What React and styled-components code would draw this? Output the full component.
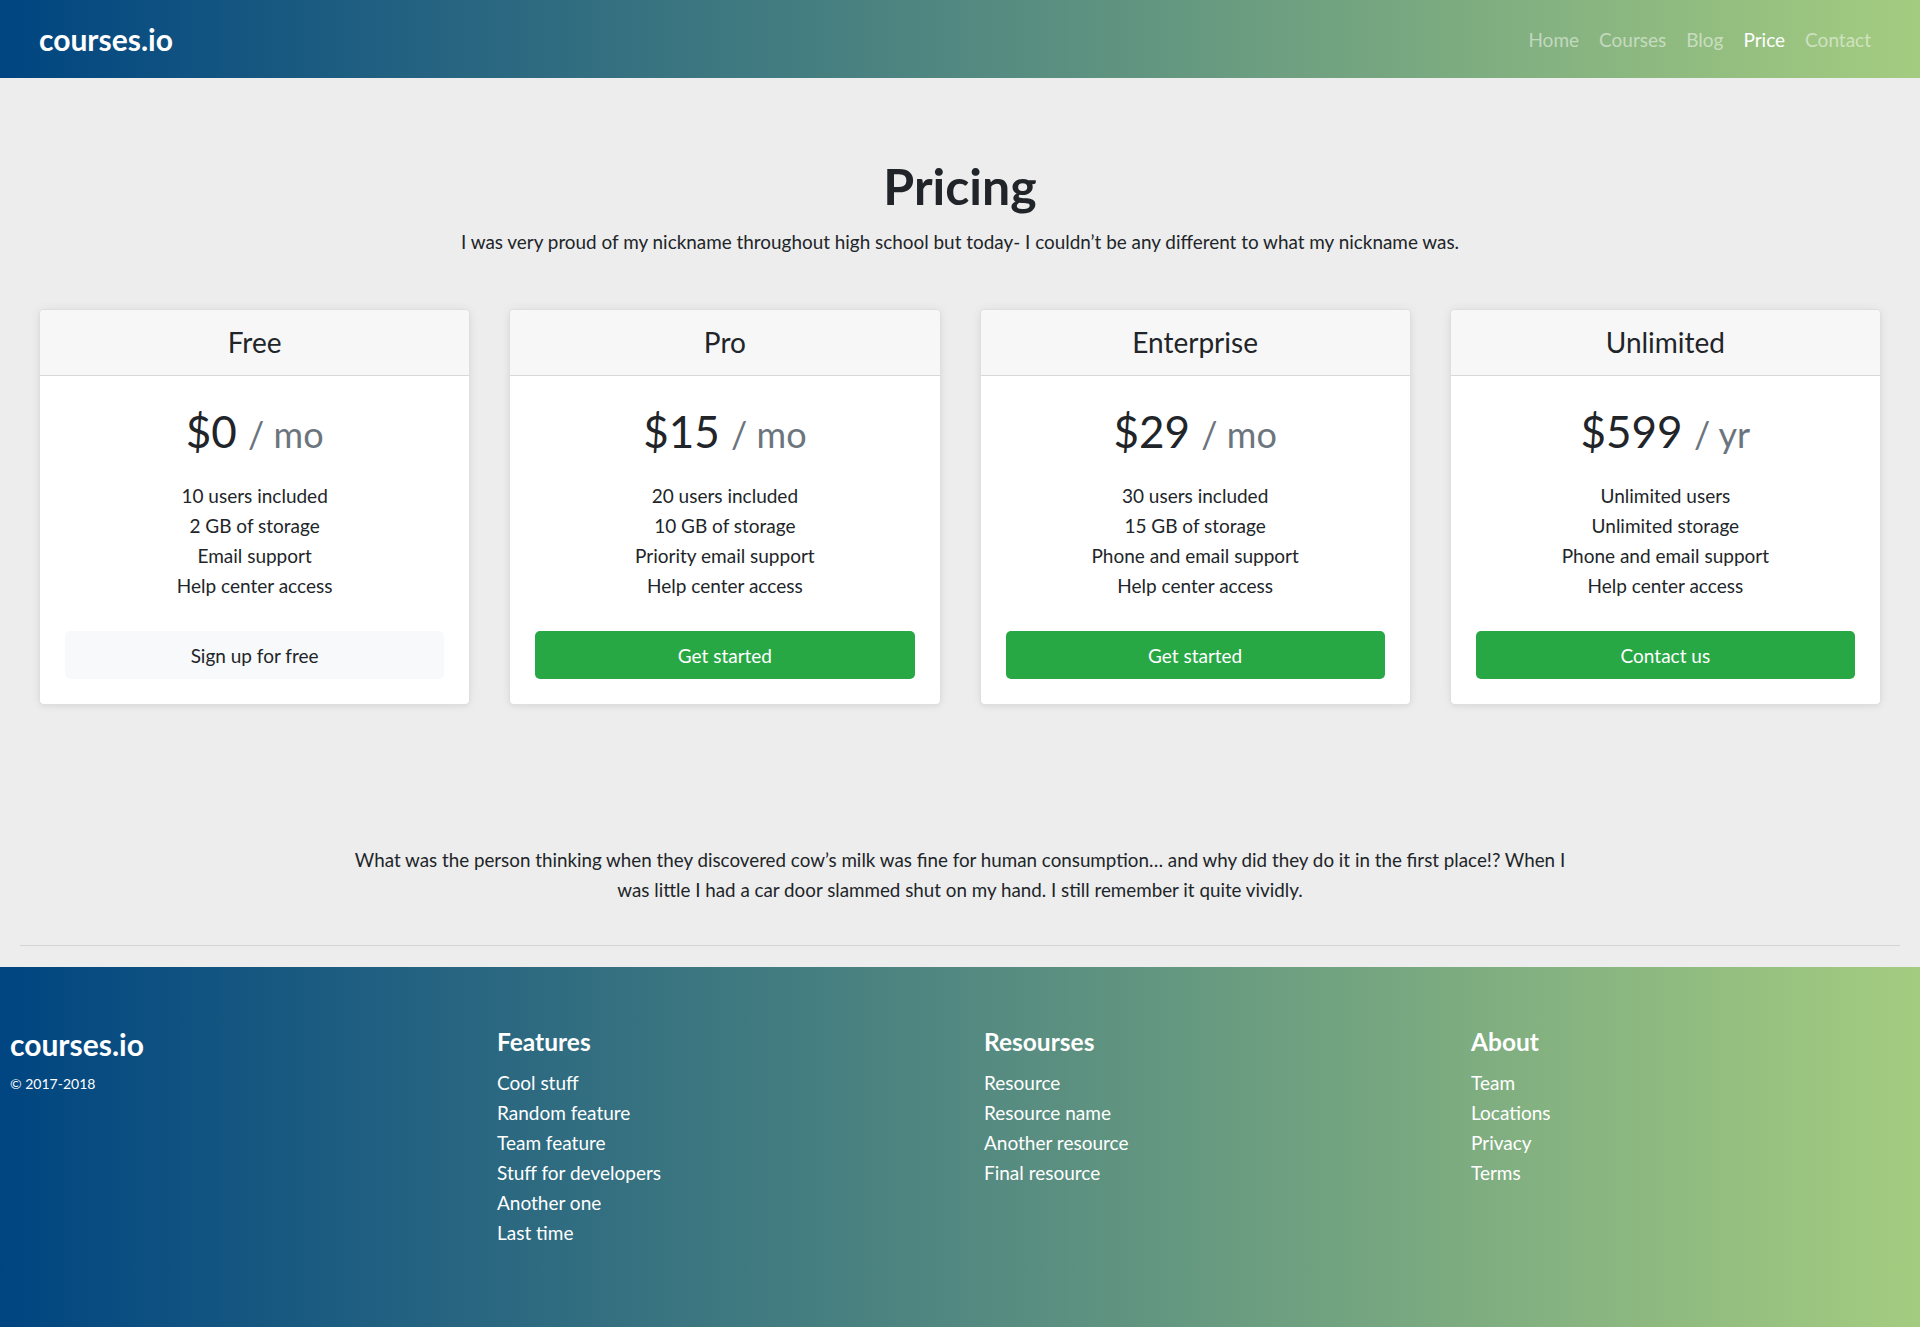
import React from "react";
import styled, { createGlobalStyle } from "styled-components";

const brandGradient = "linear-gradient(to right, #004581 0%, #a4cc80 100%)";

const plans = [
  {
    name: "Free",
    price: "$0",
    period: "mo",
    features: ["10 users included", "2 GB of storage", "Email support", "Help center access"],
    cta: "Sign up for free",
    primary: false,
  },
  {
    name: "Pro",
    price: "$15",
    period: "mo",
    features: ["20 users included", "10 GB of storage", "Priority email support", "Help center access"],
    cta: "Get started",
    primary: true,
  },
  {
    name: "Enterprise",
    price: "$29",
    period: "mo",
    features: ["30 users included", "15 GB of storage", "Phone and email support", "Help center access"],
    cta: "Get started",
    primary: true,
  },
  {
    name: "Unlimited",
    price: "$599",
    period: "yr",
    features: ["Unlimited users", "Unlimited storage", "Phone and email support", "Help center access"],
    cta: "Contact us",
    primary: true,
  },
];

const footerColumns = [
  {
    title: "Features",
    links: ["Cool stuff", "Random feature", "Team feature", "Stuff for developers", "Another one", "Last time"],
  },
  {
    title: "Resourses",
    links: ["Resource", "Resource name", "Another resource", "Final resource"],
  },
  {
    title: "About",
    links: ["Team", "Locations", "Privacy", "Terms"],
  },
];

const navItems = ["Home", "Courses", "Blog", "Price", "Contact"];

export default function App() {
  return (
    <>
      <GlobalStyle />
      <Header>
        <Brand href="#">courses.io</Brand>
        <Nav>
          {navItems.map((item) => (
            <NavLink key={item} href="#" $active={item === "Price"}>
              {item}
            </NavLink>
          ))}
        </Nav>
      </Header>

      <main>
        <PricingHeader>
          <Title>Pricing</Title>
          <Intro>
            I was very proud of my nickname throughout high school but today- I couldn’t be any
            different to what my nickname was.
          </Intro>
        </PricingHeader>

        <CardDeck>
          {plans.map((plan) => (
            <Card key={plan.name}>
              <CardHeader>
                <PlanName>{plan.name}</PlanName>
              </CardHeader>
              <CardBody>
                <Price>
                  {plan.price} <Period>/ {plan.period}</Period>
                </Price>
                <FeatureList>
                  {plan.features.map((f) => (
                    <li key={f}>{f}</li>
                  ))}
                </FeatureList>
                <PlanButton $primary={plan.primary}>{plan.cta}</PlanButton>
              </CardBody>
            </Card>
          ))}
        </CardDeck>

        <Story>
          What was the person thinking when they discovered cow’s milk was fine for human
          consumption… and why did they do it in the first place!? When I was little I had a car
          door slammed shut on my hand. I still remember it quite vividly.
        </Story>
        <Divider />
      </main>

      <Footer>
        <FooterGrid>
          <div>
            <FooterBrand>courses.io</FooterBrand>
            <Copyright>© 2017-2018</Copyright>
          </div>
          {footerColumns.map((col) => (
            <div key={col.title}>
              <FooterTitle>{col.title}</FooterTitle>
              <FooterList>
                {col.links.map((l) => (
                  <li key={l}>
                    <FooterLink href="#">{l}</FooterLink>
                  </li>
                ))}
              </FooterList>
            </div>
          ))}
        </FooterGrid>
      </Footer>
    </>
  );
}

const GlobalStyle = createGlobalStyle`
  * {
    box-sizing: border-box;
  }

  html,
  body {
    margin: 0;
    padding: 0;
  }

  body {
    background-color: #ededed;
    color: #212529;
    font-family: Lato, "Open Sans", sans-serif;
    font-size: 19px;
    line-height: 30px;
    overflow-x: hidden;
  }
`;

const Header = styled.header`
  height: 78px;
  padding: 0 39px;
  display: flex;
  align-items: center;
  justify-content: space-between;
  background: ${brandGradient};
`;

const Brand = styled.a`
  color: #fff;
  font-size: 30px;
  font-weight: 700;
  line-height: normal;
  text-decoration: none;
`;

const Nav = styled.nav`
  display: flex;
`;

const NavLink = styled.a`
  padding: 0 10px;
  font-size: 19px;
  line-height: normal;
  text-decoration: none;
  color: ${({ $active }) => ($active ? "#fff" : "rgba(255, 255, 255, 0.5)")};
`;

const PricingHeader = styled.section`
  padding: 79px 20px 52px;
  text-align: center;
`;

const Title = styled.h1`
  margin: 0;
  font-size: 50px;
  font-weight: 700;
  line-height: 58px;
`;

const Intro = styled.p`
  margin: 12px 0 0;
  font-size: 18.9px;
`;

const CardDeck = styled.div`
  display: grid;
  grid-template-columns: repeat(4, 1fr);
  gap: 39px;
  padding: 0 39px;
`;

const Card = styled.div`
  background-color: #fff;
  border: 1px solid rgba(0, 0, 0, 0.125);
  border-radius: 5px;
  box-shadow: 0 0 12px rgba(0, 0, 0, 0.06), 0 2px 4px rgba(0, 0, 0, 0.04);
  text-align: center;
  overflow: hidden;
`;

const CardHeader = styled.div`
  padding: 14px 25px 15px;
  background-color: #f7f7f7;
  border-bottom: 1px solid rgba(0, 0, 0, 0.125);
`;

const PlanName = styled.h4`
  margin: 0;
  font-size: 28px;
  font-weight: 400;
  line-height: 36px;
`;

const CardBody = styled.div`
  padding: 25px;
`;

const Price = styled.h1`
  margin: 0 0 20px;
  font-size: 44px;
  font-weight: 400;
  line-height: 60px;
`;

const Period = styled.small`
  font-size: 36px;
  line-height: 1;
  color: #6c757d;
`;

const FeatureList = styled.ul`
  list-style: none;
  margin: 0 0 30px;
  padding: 0;
`;

const PlanButton = styled.button`
  display: block;
  width: 100%;
  height: 48px;
  border: 0;
  border-radius: 5px;
  font-family: inherit;
  font-size: 19px;
  cursor: pointer;
  background-color: ${({ $primary }) => ($primary ? "#28a745" : "#f8f9fa")};
  color: ${({ $primary }) => ($primary ? "#fff" : "#212529")};
`;

const Story = styled.p`
  max-width: 1230px;
  margin: 140px auto 0;
  font-size: 18.8px;
  text-align: center;
`;

const Divider = styled.hr`
  margin: 40px 20px 21px;
  border: 0;
  border-top: 1px solid rgba(0, 0, 0, 0.1);
`;

const Footer = styled.footer`
  height: 360px;
  padding: 60px 0 0 10px;
  background: ${brandGradient};
  color: #fff;
`;

const FooterGrid = styled.div`
  display: grid;
  grid-template-columns: repeat(3, 487px) 1fr;
`;

const FooterBrand = styled.div`
  margin-bottom: 11px;
  font-size: 30px;
  font-weight: 700;
  line-height: 34px;
`;

const Copyright = styled.small`
  display: block;
  font-size: 14px;
  line-height: 24px;
`;

const FooterTitle = styled.h5`
  margin: 0 0 12px;
  font-size: 24.5px;
  font-weight: 700;
  line-height: 29px;
`;

const FooterList = styled.ul`
  list-style: none;
  margin: 0;
  padding: 0;
`;

const FooterLink = styled.a`
  color: #fff;
  text-decoration: none;
`;
